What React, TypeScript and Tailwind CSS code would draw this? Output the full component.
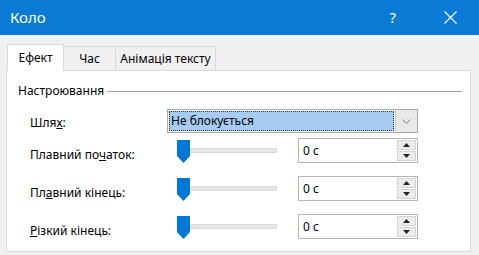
import React from 'react'

const font = { fontFamily: '"Noto Sans", "Open Sans", sans-serif' }

function Thumb() {
  return (
    <svg width="13" height="23" viewBox="0 0 13 23" className="shrink-0">
      <path d="M0 0 H13 V16 L6.5 23 L0 16 Z" fill="#0078d7" />
    </svg>
  )
}

function Spin() {
  return (
    <div className="ml-[21px] w-[120px] h-[25px] border border-[#b4b4b4] bg-white flex items-center justify-between">
      <span className="pl-[4px] text-[12px] text-black">0 с</span>
      <div className="mr-[1px] w-[19px] h-[21px] flex flex-col gap-px">
        <div className="flex-1 bg-[#ececec] border border-[#d4d4d4] flex items-center justify-center">
          <svg width="7" height="4" viewBox="0 0 7 4"><path d="M0 4 L3.5 0 L7 4 Z" fill="#222" /></svg>
        </div>
        <div className="flex-1 bg-[#ececec] border border-[#d4d4d4] flex items-center justify-center">
          <svg width="7" height="4" viewBox="0 0 7 4"><path d="M0 0 L3.5 4 L7 0 Z" fill="#222" /></svg>
        </div>
      </div>
    </div>
  )
}

function SliderRow({ label, mt }: { label: React.ReactNode; mt: string }) {
  return (
    <div className={`flex items-start h-[25px] ${mt}`}>
      <div className="w-[137px] pt-[9px] text-[12px] leading-[16px] text-black">{label}</div>
      <div className="flex items-start ml-[10px] mt-[2px] w-[100px]">
        <Thumb />
        <div className="mt-[8px] w-[87px] h-[5px] bg-[#e7e7e7] border border-[#dadada]" />
      </div>
      <Spin />
    </div>
  )
}

export default function App() {
  return (
    <div className="w-[479px] h-[255px] bg-[#f0f0f0] overflow-hidden flex flex-col" style={font}>
      <div className="h-[35px] shrink-0 bg-[#0a7ad5] flex items-center text-white">
        <span className="pl-[10px] text-[15px]">Коло</span>
        <span className="ml-auto mr-[48px] text-[15px]">?</span>
        <svg width="13" height="13" viewBox="0 0 13 13" className="mr-[22px]">
          <path d="M0.5 0.5 L12.5 12.5 M12.5 0.5 L0.5 12.5" stroke="white" strokeWidth="1.2" />
        </svg>
      </div>

      <div className="flex items-end pl-[7px] pt-[8px] h-[35px] shrink-0 text-[12px] text-black">
        <div className="relative z-10 h-[27px] w-[57px] bg-white border border-b-0 border-[#d9d9d9] flex items-center justify-center -mb-px">
          Ефект
        </div>
        <div className="h-[24px] w-[52px] border border-l-0 border-b-0 border-[#d9d9d9] flex items-center justify-center">
          Час
        </div>
        <div className="h-[24px] w-[100px] border border-l-0 border-b-0 border-[#d9d9d9] flex items-center justify-center">
          Анімація тексту
        </div>
      </div>

      <div className="ml-[6px] w-[465px] h-[182px] bg-white border border-[#d9d9d9]">
        <div className="flex items-center pl-[11px] pr-[8px] pt-[12px]">
          <span className="text-[12px] leading-[16px] text-black">Настроювання</span>
          <div className="flex-1 ml-[3px] h-px bg-[#a0a0a0]" />
        </div>

        <div className="pl-[23px]">
          <div className="flex items-start h-[24px] mt-[10px]">
            <div className="w-[137px] pt-[6px] text-[12px] leading-[16px] text-black">
              Шля<span className="underline">х</span>:
            </div>
            <div className="w-[251px] h-[24px] border border-[#a8a8a8] bg-white flex items-stretch">
              <div className="flex-1 m-px bg-[#a6cdf1] border border-dotted border-[#333] flex items-center pl-[1px] text-[12px] text-black">
                Не блокується
              </div>
              <div className="w-[22px] bg-[#e9e9e9] border-l border-[#d0d0d0] flex items-center justify-center">
                <svg width="9" height="5" viewBox="0 0 9 5">
                  <path d="M0.5 0.5 L4.5 4.5 L8.5 0.5" fill="none" stroke="#777" strokeWidth="1" />
                </svg>
              </div>
            </div>
          </div>

          <SliderRow mt="mt-[5px]" label={<>Плавний по<span className="underline">ч</span>аток:</>} />
          <SliderRow mt="mt-[13px]" label={<>Пл<span className="underline">а</span>вний кінець:</>} />
          <SliderRow mt="mt-[13px]" label={<><span className="underline">Р</span>ізкий кінець:</>} />
        </div>
      </div>
    </div>
  )
}
